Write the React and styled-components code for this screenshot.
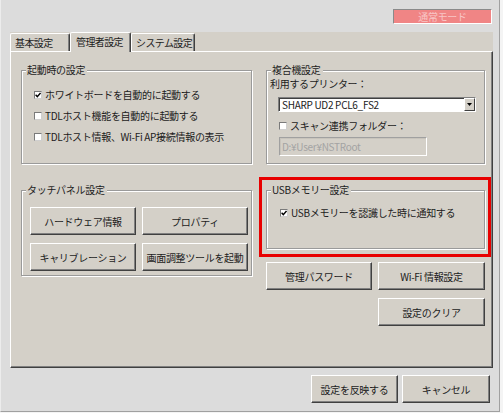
import React from "react";
import styled, { createGlobalStyle } from "styled-components";

const Global = createGlobalStyle`
  html, body { margin: 0; padding: 0; background: #f4f4f4; }
  * { box-sizing: border-box; }
`;

const Win = styled.div`
  width: 500px;
  height: 412px;
  background: #dcdcdc;
  border-right: 1px solid #a0a0a0;
  border-bottom: 1px solid #a0a0a0;
  border-left: 1px solid #ececec;
  display: flex;
  flex-direction: column;
  font-family: "Noto Sans CJK JP", "Noto Sans", sans-serif;
  font-size: 10px;
  line-height: 12px;
  letter-spacing: -0.3px;
  color: #1c1c1c;
`;

const TopBar = styled.div`
  height: 32px;
  display: flex;
  justify-content: flex-end;
  align-items: flex-start;
  padding: 9px 7px 0 0;
`;

const Badge = styled.div`
  width: 99px;
  height: 15px;
  background: #f08585;
  border: 1px solid;
  border-color: #8a8a8a #ffffff #ffffff #8a8a8a;
  color: #f8c6c6;
  text-align: center;
  line-height: 13px;
`;

const TabControl = styled.div`
  margin-left: 9px;
  width: 483px;
  height: 336px;
  background: #d4d0c8;
  display: flex;
  flex-direction: column;
`;

const TabRow = styled.div`
  height: 19px;
  display: flex;
  align-items: flex-end;
`;

const Tab = styled.div`
  width: ${(p) => p.$w}px;
  height: ${(p) => (p.$active ? 20 : 18)}px;
  line-height: ${(p) => (p.$active ? 18 : 17)}px;
  padding-left: ${(p) => (p.$active ? 5 : 4)}px;
  background: #d4d0c8;
  border-top: 1px solid #ffffff;
  border-left: 1px solid #ffffff;
  border-right: 1px solid #404040;
  box-shadow: inset -1px 0 0 #808080;
  border-radius: 2px 2px 0 0;
  letter-spacing: -0.6px;
  white-space: nowrap;
  overflow: hidden;
  position: ${(p) => (p.$active ? "relative" : "static")};
  z-index: ${(p) => (p.$active ? 1 : 0)};
  margin-bottom: ${(p) => (p.$active ? -1 : 0)}px;
`;

const Panel = styled.div`
  flex: 1;
  border: 1px solid;
  border-color: #ffffff #404040 #404040 #ffffff;
  box-shadow: inset -1px -1px 0 #808080;
  padding: 18px 0 0 10px;
  display: grid;
  grid-template-columns: 231px 219px;
  column-gap: 14px;
  align-content: start;
  align-items: start;
`;

const Column = styled.div`
  display: flex;
  flex-direction: column;
`;

const Group = styled.div`
  position: relative;
  height: ${(p) => p.$h}px;
  margin-top: ${(p) => p.$mt || 0}px;
  border: 1px solid #9a9a9a;
  box-shadow: inset 1px 1px 0 #ffffff, 1px 1px 0 #ffffff;
  padding: ${(p) => p.$pad};
`;

const GroupTitle = styled.div`
  position: absolute;
  top: -7px;
  left: 4px;
  padding: 0 2px 0 1px;
  background: #d4d0c8;
  white-space: nowrap;
`;

const CheckRow = styled.div`
  display: flex;
  align-items: center;
  gap: 3px;
  height: ${(p) => p.$h || 21}px;
  margin: ${(p) => p.$m || "0"};
  white-space: nowrap;
`;

const Box = styled.span`
  width: 8px;
  height: 8px;
  background: #ffffff;
  border: 1px solid;
  border-color: #7a7a7a #cfcfcf #cfcfcf #7a7a7a;
  display: flex;
  align-items: center;
  justify-content: center;
  flex: none;
`;

const Check = ({ checked }) => (
  <Box>
    {checked && (
      <svg width="6" height="6" viewBox="0 0 6 6">
        <path d="M0.6 2.8 L2.3 4.6 L5.5 0.9" fill="none" stroke="#000" strokeWidth="1.4" />
      </svg>
    )}
  </Box>
);

const Label = styled.div`
  height: 12px;
  white-space: nowrap;
`;

const Combo = styled.div`
  width: 198px;
  height: 15px;
  margin: 7px 0 0 8px;
  background: #ffffff;
  border: 1px solid;
  border-color: #808080 #ffffff #ffffff #808080;
  box-shadow: inset 1px 1px 0 #404040;
  display: flex;
  align-items: stretch;
`;

const ComboText = styled.span`
  flex: 1;
  padding-left: 3px;
  line-height: 13px;
  white-space: nowrap;
`;

const DropBtn = styled.span`
  width: 11px;
  background: #d4d0c8;
  border: 1px solid;
  border-color: #ffffff #404040 #404040 #ffffff;
  display: flex;
  align-items: center;
  justify-content: center;
`;

const TextBox = styled.div`
  width: 148px;
  height: 19px;
  margin: 3px 0 0 9px;
  background: #d4d0c8;
  border: 1px solid;
  border-color: #a0a0a0 #ffffff #ffffff #a0a0a0;
  box-shadow: inset 1px 1px 0 #c8c4bc;
  color: #a3a3a3;
  padding-left: 2px;
  line-height: 17px;
  white-space: nowrap;
`;

const BtnGrid = styled.div`
  display: grid;
  grid-template-columns: ${(p) => p.$cols};
  grid-auto-rows: 28px;
  column-gap: 6px;
  row-gap: 8px;
  margin-top: ${(p) => p.$mt || 0}px;
`;

const Button = styled.button`
  width: ${(p) => (p.$w ? `${p.$w}px` : "auto")};
  height: 28px;
  padding: 0;
  background: #d4d0c8;
  border: 1px solid;
  border-color: #ffffff #404040 #404040 #ffffff;
  box-shadow: inset -1px -1px 0 #808080;
  font-family: inherit;
  font-size: 10px;
  letter-spacing: inherit;
  color: inherit;
  white-space: nowrap;
`;

const RightRow = styled.div`
  display: flex;
  justify-content: flex-end;
  gap: ${(p) => p.$gap || 0}px;
  margin-top: ${(p) => p.$mt || 0}px;
  padding-right: ${(p) => p.$pr || 0}px;
`;

const Highlight = styled.div`
  position: absolute;
  top: -14px;
  left: -8px;
  right: -7px;
  bottom: -9px;
  border: 3px solid #e80000;
  pointer-events: none;
`;

export default function App() {
  return (
    <>
      <Global />
      <Win>
        <TopBar>
          <Badge>通常モード</Badge>
        </TopBar>
        <TabControl>
          <TabRow>
            <Tab $w={60}>基本設定</Tab>
            <Tab $w={61} $active>管理者設定</Tab>
            <Tab $w={64}>システム設定</Tab>
          </TabRow>
          <Panel>
            <Column>
              <Group $h={94} $pad="13px 0 0 12px">
                <GroupTitle>起動時の設定</GroupTitle>
                <CheckRow>
                  <Check checked />
                  ホワイトボードを自動的に起動する
                </CheckRow>
                <CheckRow>
                  <Check />
                  TDLホスト機能を自動的に起動する
                </CheckRow>
                <CheckRow>
                  <Check />
                  TDLホスト情報、Wi-Fi AP接続情報の表示
                </CheckRow>
              </Group>
              <Group $h={86} $mt={26} $pad="16px 0 0 8px">
                <GroupTitle>タッチパネル設定</GroupTitle>
                <BtnGrid $cols="106px 106px">
                  <Button>ハードウェア情報</Button>
                  <Button>プロパティ</Button>
                  <Button>キャリブレーション</Button>
                  <Button>画面調整ツールを起動</Button>
                </BtnGrid>
              </Group>
            </Column>
            <Column>
              <Group $h={94} $pad="7px 0 0 3px">
                <GroupTitle>複合機設定</GroupTitle>
                <Label>利用するプリンター：</Label>
                <Combo>
                  <ComboText>SHARP UD2 PCL6_FS2</ComboText>
                  <DropBtn>
                    <svg width="5" height="3" viewBox="0 0 5 3">
                      <path d="M0 0 H5 L2.5 3 Z" fill="#000" />
                    </svg>
                  </DropBtn>
                </Combo>
                <CheckRow $h={16} $m="6px 0 0 9px">
                  <Check />
                  スキャン連携フォルダー：
                </CheckRow>
                <TextBox>D:¥User¥NSTRoot</TextBox>
              </Group>
              <Group $h={59} $mt={26} $pad="14px 0 0 13px">
                <GroupTitle>USBメモリー設定</GroupTitle>
                <CheckRow $h={16}>
                  <Check checked />
                  USBメモリーを認識した時に通知する
                </CheckRow>
                <Highlight />
              </Group>
              <BtnGrid $cols="106px 107px" $mt={13}>
                <Button>管理パスワード</Button>
                <Button>Wi-Fi 情報設定</Button>
              </BtnGrid>
              <RightRow $mt={8}>
                <Button $w={107}>設定のクリア</Button>
              </RightRow>
            </Column>
          </Panel>
        </TabControl>
        <RightRow $mt={7} $gap={4} $pr={9}>
          <Button $w={87}>設定を反映する</Button>
          <Button $w={88}>キャンセル</Button>
        </RightRow>
      </Win>
    </>
  );
}
